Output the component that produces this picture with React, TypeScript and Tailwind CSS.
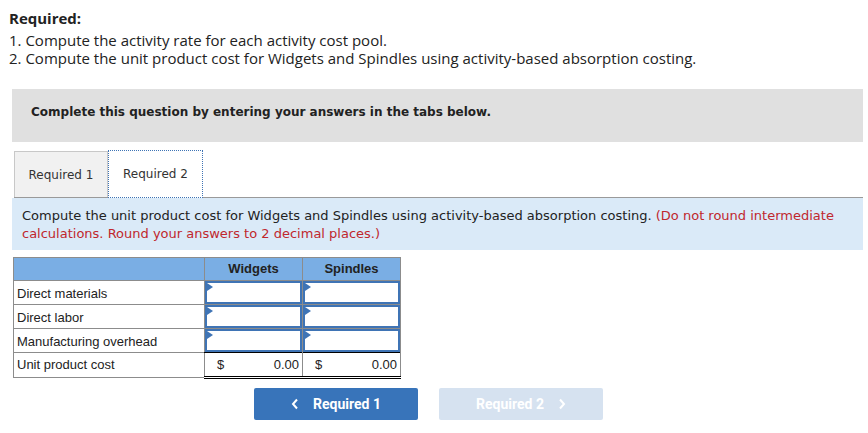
import React from "react"

const ROWS = ["Direct materials", "Direct labor", "Manufacturing overhead"]

function InputCell() {
  return (
    <td className="p-0 border border-[#8c8c8c]">
      <div className="relative h-[23px] border-2 border-[#3f74b5] bg-white">
        <span className="absolute left-0 top-0 w-0 h-0 border-y-[4px] border-y-transparent border-l-[6px] border-l-[#3f74b5]" />
      </div>
    </td>
  )
}

export default function App() {
  return (
    <div className="w-[868px] h-[433px] bg-white text-[#333] overflow-hidden">
      <div className="pl-[9px] pt-[9px] font-['Open_Sans',sans-serif] text-[15px] leading-[18px] text-[#222]">
        <div className="font-bold mb-[4px]">Required:</div>
        <div>1. Compute the activity rate for each activity cost pool.</div>
        <div>2. Compute the unit product cost for Widgets and Spindles using activity-based absorption costing.</div>
      </div>

      <div className="ml-[12px] mr-[5px] mt-[22px] h-[53px] bg-[#e0e0e0] pl-[19px] pt-[14px] font-['DejaVu_Sans',Verdana,sans-serif] text-[12px] font-bold text-[#222]">
        Complete this question by entering your answers in the tabs below.
      </div>

      <div className="ml-[14px] mr-[5px] mt-[8px] flex items-end border-b border-[#9a9a9a] font-['DejaVu_Sans',Verdana,sans-serif] text-[12px] text-[#333]">
        <div className="w-[94px] h-[46px] bg-[#f1f1f1] border border-[#c8c8c8] border-b-0 flex items-center justify-center">
          Required 1
        </div>
        <div className="w-[95px] h-[48px] bg-white border border-dotted border-[#3f74b5] flex items-center justify-center -mb-px">
          Required 2
        </div>
      </div>

      <div className="ml-[12px] mr-[5px] h-[52px] bg-[#daeaf8] pl-[10px] pt-[9px] font-['DejaVu_Sans',Verdana,sans-serif] text-[13px] leading-[18px] text-[#222]">
        Compute the unit product cost for Widgets and Spindles using activity-based absorption costing.{" "}
        <span className="text-[#c0272d]">(Do not round intermediate calculations. Round your answers to 2 decimal places.)</span>
      </div>

      <table className="ml-[13px] mt-[7px] border-collapse border border-[#8c8c8c] font-['Liberation_Sans',Arial,sans-serif] text-[13px] text-[#222]">
        <thead>
          <tr className="bg-[#7aaee4] h-[23px]">
            <th className="w-[191px] border border-[#8c8c8c]" />
            <th className="w-[98px] border border-[#8c8c8c] font-bold text-[13px]">Widgets</th>
            <th className="w-[98px] border border-[#8c8c8c] font-bold text-[13px]">Spindles</th>
          </tr>
        </thead>
        <tbody>
          {ROWS.map((r) => (
            <tr key={r} className="h-[24px]">
              <td className="border border-[#8c8c8c] pl-[3px] pt-[1px] leading-[15px]">{r}</td>
              <InputCell />
              <InputCell />
            </tr>
          ))}
          <tr className="h-[25px]">
            <td className="border border-[#8c8c8c] pl-[3px]">Unit product cost</td>
            {[0, 1].map((i) => (
              <td key={i} className="border-x border-[#8c8c8c] border-t border-t-black border-b-[3px] border-b-black border-double px-[3px]">
                <div className="flex justify-between">
                  <span className="pl-[9px]">$</span>
                  <span>0.00</span>
                </div>
              </td>
            ))}
          </tr>
        </tbody>
      </table>

      <div className="mt-[9px] flex gap-[21px] pl-[254px] font-['Roboto',sans-serif] font-bold text-[14px]">
        <button className="w-[164px] h-[32px] rounded-[2px] bg-[#3874ba] text-white flex items-center justify-center gap-[14px]">
          <svg width="8" height="12" viewBox="0 0 8 12" fill="none"><path d="M6 1.5L2 6l4 4.5" stroke="white" strokeWidth="2" /></svg>
          Required 1
        </button>
        <button className="w-[164px] h-[32px] rounded-[2px] bg-[#d6e2f0] text-white flex items-center justify-center gap-[14px]">
          Required 2
          <svg width="8" height="12" viewBox="0 0 8 12" fill="none"><path d="M2 1.5L6 6l-4 4.5" stroke="white" strokeWidth="2" /></svg>
        </button>
      </div>
    </div>
  )
}
